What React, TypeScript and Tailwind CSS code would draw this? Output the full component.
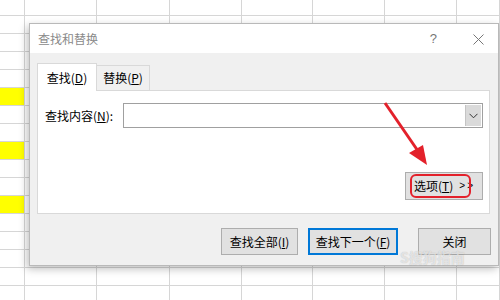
import React from "react";

const colWidths = [25, 72, 73, 72, 71, 72, 72, 43];
const rowHeights = [16, ...Array.from({ length: 16 }, () => 18)];
const yellowRows = new Set([5, 8, 11]);

const font = { fontFamily: '"Microsoft YaHei","Noto Sans CJK SC","Noto Sans",sans-serif' };

function Sheet() {
  return (
    <div className="flex flex-col">
      {rowHeights.map((h, r) => (
        <div key={r} className="flex" style={{ height: h }}>
          {colWidths.map((w, c) => (
            <div
              key={c}
              className={
                "box-border border-r border-b border-[#d6d6d6] " +
                (c === 0 && yellowRows.has(r) ? "bg-[#ffff00]" : "bg-white")
              }
              style={{ width: w, height: h }}
            />
          ))}
        </div>
      ))}
    </div>
  );
}

function Btn({
  children,
  className = "",
  primary = false,
}: {
  children: React.ReactNode;
  className?: string;
  primary?: boolean;
}) {
  return (
    <div
      className={
        "box-border h-[27px] flex items-center justify-center bg-[#e1e1e1] text-[12px] leading-[14px] text-black " +
        (primary ? "border-2 border-[#0078d7] " : "border border-[#adadad] ") +
        className
      }
    >
      {children}
    </div>
  );
}

export default function App() {
  return (
    <div className="relative w-[500px] h-[300px] overflow-hidden bg-white" style={font}>
      <Sheet />
      <div className="absolute left-[29px] top-[23px] w-[470px] h-[243px] box-border border border-[#b9b9b9] bg-[#f0f0f0] shadow-[-2px_3px_8px_rgba(0,0,0,0.25)] flex flex-col">
        <div className="h-[29px] bg-white flex items-center pl-[8px] pr-[14px] text-[12px]">
          <span className="text-[#8a8a8a]">查找和替换</span>
          <span className="ml-auto mr-[36px] text-[#777] text-[13px]" style={{ fontFamily: '"Liberation Sans",sans-serif' }}>?</span>
          <svg width="11" height="11" viewBox="0 0 11 11" className="mt-[1px]">
            <path d="M0.5 0.5 L10.5 10.5 M10.5 0.5 L0.5 10.5" stroke="#777" strokeWidth="1" />
          </svg>
        </div>
        <div className="flex-1 flex flex-col pl-[7px] pr-[8px] pt-[10px]">
          <div className="flex items-end h-[27px] text-[12px]">
            <div className="box-border h-[28px] w-[60px] bg-white border border-b-0 border-[#d9d9d9] flex items-center justify-center relative z-10 -mb-px">
              <span>查找(<u>D</u>)</span>
            </div>
            <div className="box-border h-[25px] w-[53px] bg-[#f0f0f0] border border-l-0 border-b-0 border-[#d9d9d9] flex items-center justify-center">
              <span>替换(<u>P</u>)</span>
            </div>
          </div>
          <div className="box-border h-[124px] bg-white border border-[#d9d9d9] flex flex-col pl-[7px] pr-[6px] pt-[12px]">
            <div className="flex items-center h-[25px]">
              <span className="text-[12px] w-[78px]">查找内容(<u>N</u>):</span>
              <div className="box-border flex-1 h-[25px] border border-[#a0a0a0] flex justify-end p-px">
                <div className="w-[16px] h-full bg-[#dadada] border-l border-[#c4c4c4] flex items-center justify-center">
                  <svg width="9" height="6" viewBox="0 0 9 6">
                    <path d="M0.5 0.8 L4.5 4.8 L8.5 0.8" stroke="#333" strokeWidth="1" fill="none" />
                  </svg>
                </div>
              </div>
            </div>
            <div className="flex justify-end mt-[44px]">
              <div className="relative">
                <Btn className="w-[78px] h-[28px] justify-start pl-[8px]">
                  <span>选项(<u>T</u>)</span>
                  <span className="ml-[6px] text-[10px] tracking-[2px]" style={{ fontFamily: '"Liberation Sans",sans-serif' }}>&gt;&gt;</span>
                </Btn>
                <div className="absolute left-[5px] top-[2px] w-[61px] h-[24px] border-2 border-[#e3212b] rounded-[6px]" />
              </div>
            </div>
          </div>
          <div className="flex justify-end mt-[14px] -mr-[1px]">
            <Btn className="w-[77px]">查找全部(<u>I</u>)</Btn>
            <Btn primary className="w-[90px] ml-[10px]">查找下一个(<u>F</u>)</Btn>
            <Btn className="w-[73px] ml-[20px]">关闭</Btn>
          </div>
        </div>
      </div>
      <svg className="absolute left-0 top-0 pointer-events-none" width="500" height="300">
        <line x1="385" y1="103" x2="418" y2="151" stroke="#e3212b" strokeWidth="3" />
        <polygon points="427,165 409,153 423,145" fill="#e3212b" />
      </svg>
      <div className="absolute left-[400px] top-[250px] text-[14px] leading-[15px] text-white/60 font-bold pointer-events-none" style={{ textShadow: "0 0 1px rgba(0,0,0,0.25)" }}>
        S搜狗指南
      </div>
    </div>
  );
}
